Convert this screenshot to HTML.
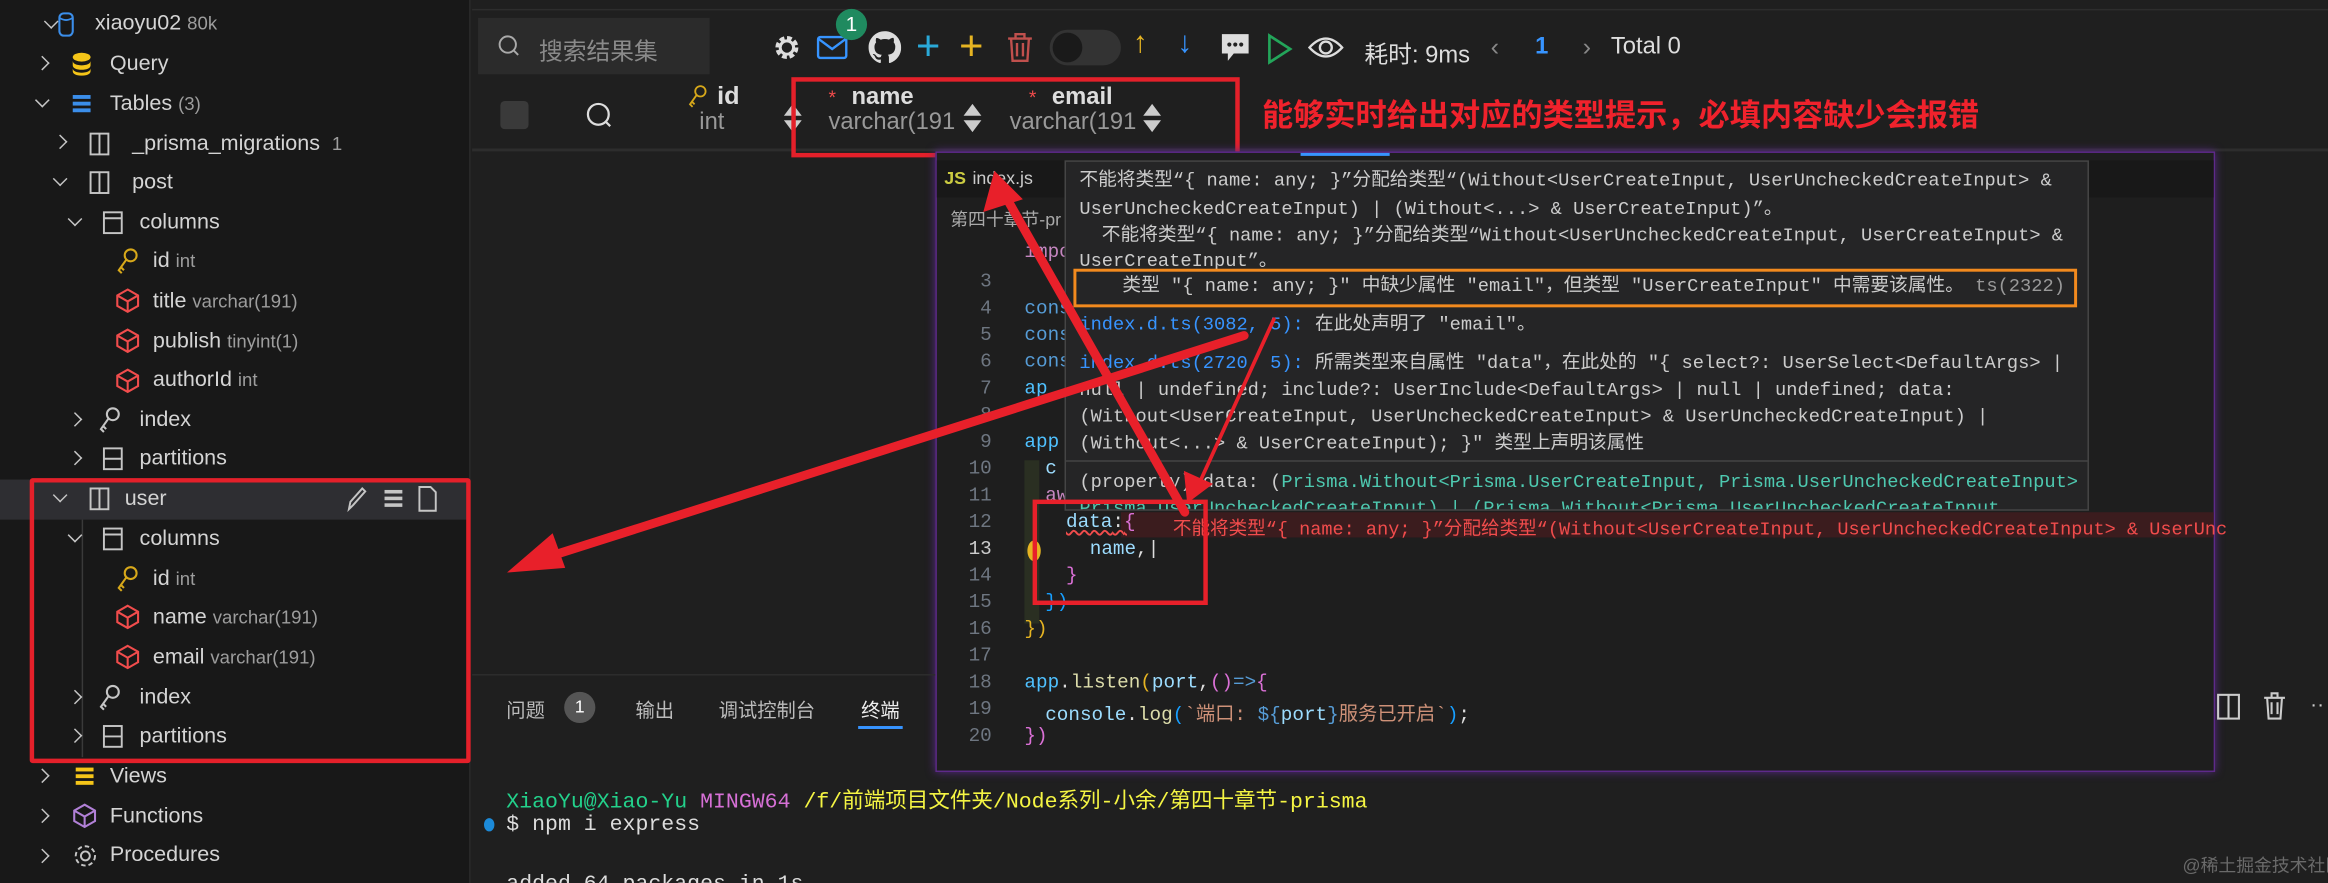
<!DOCTYPE html>
<html><head><meta charset="utf-8"><style>
*{margin:0;padding:0;box-sizing:border-box}
html,body{width:2328px;height:883px;overflow:hidden;background:#1f1f1f}
#w{position:absolute;left:0;top:0;width:1568px;height:595px;transform:scale(1.48469);transform-origin:0 0;background:#1f1f1f;font-family:"Liberation Sans","Noto Sans CJK SC",sans-serif;color:#cccccc;overflow:hidden}
.a{position:absolute;white-space:nowrap}
.t{font-size:14.5px;color:#d4d4d4}
.s{font-size:12.5px;color:#9d9d9d}
.mono{font-family:"Liberation Mono","Noto Sans CJK SC",monospace}
.ch{position:absolute;width:7px;height:7px;border-right:1.4px solid #c5c5c5;border-bottom:1.4px solid #c5c5c5}
.dn{transform:rotate(45deg)}
.rt{transform:rotate(-45deg)}
.pl{font-size:12.6px;line-height:18px}
.ln{position:absolute;left:640px;width:28px;text-align:right;font-size:13px;color:#6e7681;font-family:"Liberation Mono",monospace}
</style></head><body><div id="w">
<!-- sidebar -->
<div class="a" style="left:0;top:0;width:317px;height:595px;background:#181818;border-right:1px solid #2b2b2b"></div>
<div class="a" style="left:0;top:323px;width:317px;height:27px;background:#2e2e32"></div>
<!-- tree rows -->
<div class="ch dn" style="left:31px;top:11px"></div>
<svg class="a" style="left:38px;top:8px" width="14" height="18"><rect x="2" y="1" width="9" height="15" rx="3" fill="none" stroke="#3b8eea" stroke-width="1.4"/><path d="M2 4 Q6.5 7 11 4" stroke="#3b8eea" fill="none" stroke-width="1.2"/></svg>
<div class="a t" style="left:64px;top:8px">xiaoyu02 <span class="s">80k</span></div>

<div class="ch rt" style="left:25px;top:39px"></div>
<svg class="a" style="left:48px;top:35px" width="14" height="16"><ellipse cx="7" cy="3.5" rx="6" ry="3" fill="#f5c518"/><path d="M1 6c0 4 12 4 12 0v3c0 4-12 4-12 0zM1 11c0 4 12 4 12 0v2c0 4-12 4-12 0z" fill="#f5c518"/></svg>
<div class="a t" style="left:74px;top:35px">Query</div>

<div class="ch dn" style="left:25px;top:64px"></div>
<svg class="a" style="left:48px;top:63px" width="14" height="14"><rect x="1" y="1" width="12" height="2.6" fill="#3b8eea"/><rect x="1" y="5.5" width="12" height="2.6" fill="#3b8eea"/><rect x="1" y="10" width="12" height="2.6" fill="#3b8eea"/></svg>
<div class="a t" style="left:74px;top:62px">Tables <span class="s">(3)</span></div>

<svg width="0" height="0" style="position:absolute"><defs>
<symbol id="tb" viewBox="0 0 14 16"><rect x="1" y="1" width="12" height="14" fill="none" stroke="#c5c5c5" stroke-width="1.3"/><line x1="7" y1="1" x2="7" y2="15" stroke="#c5c5c5" stroke-width="1.3"/></symbol>
<symbol id="cl" viewBox="0 0 14 16"><rect x="1" y="1" width="12" height="14" fill="none" stroke="#c5c5c5" stroke-width="1.3"/><line x1="1" y1="5" x2="13" y2="5" stroke="#c5c5c5" stroke-width="1.3"/></symbol>
<symbol id="pt" viewBox="0 0 14 16"><rect x="1" y="1" width="12" height="14" fill="none" stroke="#c5c5c5" stroke-width="1.3"/><line x1="1" y1="8" x2="13" y2="8" stroke="#c5c5c5" stroke-width="1.3"/></symbol>
<symbol id="ky" viewBox="0 0 16 18"><circle cx="10" cy="5" r="4" fill="none" stroke="currentColor" stroke-width="1.4"/><path d="M7 8 L2 15 L4 17 M3.5 13 L5.5 15" fill="none" stroke="currentColor" stroke-width="1.4"/></symbol>
<symbol id="cb" viewBox="0 0 16 18"><path d="M8 1 L15 5 L15 12 L8 16 L1 12 L1 5 Z M1 5 L8 9 L15 5 M8 9 L8 16" fill="none" stroke="currentColor" stroke-width="1.4"/></symbol>
</defs></svg>

<div class="ch rt" style="left:37px;top:92px"></div>
<svg class="a" style="left:60px;top:89px" width="14" height="16"><use href="#tb"/></svg>
<div class="a t" style="left:89px;top:89px">_prisma_migrations <span class="s" style="margin-left:4px">1</span></div>

<div class="ch dn" style="left:37px;top:117px"></div>
<svg class="a" style="left:60px;top:115px" width="14" height="16"><use href="#tb"/></svg>
<div class="a t" style="left:89px;top:115px">post</div>

<div class="ch dn" style="left:47px;top:144px"></div>
<svg class="a" style="left:69px;top:142px" width="14" height="16"><use href="#cl"/></svg>
<div class="a t" style="left:94px;top:142px">columns</div>

<svg class="a" style="left:78px;top:167px;color:#d7a81a" width="16" height="18"><use href="#ky"/></svg>
<div class="a t" style="left:103px;top:168px">id <span class="s">int</span></div>
<svg class="a" style="left:78px;top:194px;color:#f14c4c" width="16" height="18"><use href="#cb"/></svg>
<div class="a t" style="left:103px;top:195px">title <span class="s">varchar(191)</span></div>
<svg class="a" style="left:78px;top:221px;color:#f14c4c" width="16" height="18"><use href="#cb"/></svg>
<div class="a t" style="left:103px;top:222px">publish <span class="s">tinyint(1)</span></div>
<svg class="a" style="left:78px;top:248px;color:#f14c4c" width="16" height="18"><use href="#cb"/></svg>
<div class="a t" style="left:103px;top:248px">authorId <span class="s">int</span></div>

<div class="ch rt" style="left:47px;top:279px"></div>
<svg class="a" style="left:66px;top:274px;color:#c5c5c5" width="16" height="18"><use href="#ky"/></svg>
<div class="a t" style="left:94px;top:275px">index</div>
<div class="ch rt" style="left:47px;top:305px"></div>
<svg class="a" style="left:69px;top:301px" width="14" height="16"><use href="#pt"/></svg>
<div class="a t" style="left:94px;top:301px">partitions</div>

<div class="ch dn" style="left:37px;top:330px"></div>
<svg class="a" style="left:60px;top:328px" width="14" height="16"><use href="#tb"/></svg>
<div class="a t" style="left:84px;top:328px">user</div>
<svg class="a" style="left:232px;top:327px" width="16" height="18"><path d="M3 16 L4 11 L12 2 L14 4 L6 13 Z" fill="none" stroke="#c5c5c5" stroke-width="1.3"/></svg>
<svg class="a" style="left:258px;top:329px" width="14" height="14"><rect x="1" y="1" width="12" height="2.4" fill="#c5c5c5"/><rect x="1" y="5.5" width="12" height="2.4" fill="#c5c5c5"/><rect x="1" y="10" width="12" height="2.4" fill="#c5c5c5"/></svg>
<svg class="a" style="left:281px;top:327px" width="14" height="18"><path d="M1.5 1 L9 1 L12.5 4.5 L12.5 17 L1.5 17 Z" fill="none" stroke="#c5c5c5" stroke-width="1.3"/></svg>
<div class="a" style="left:55px;top:350px;width:1px;height:160px;background:#3a3a3a"></div>

<div class="ch dn" style="left:47px;top:357px"></div>
<svg class="a" style="left:69px;top:355px" width="14" height="16"><use href="#cl"/></svg>
<div class="a t" style="left:94px;top:355px">columns</div>
<svg class="a" style="left:78px;top:381px;color:#d7a81a" width="16" height="18"><use href="#ky"/></svg>
<div class="a t" style="left:103px;top:382px">id <span class="s">int</span></div>
<svg class="a" style="left:78px;top:407px;color:#f14c4c" width="16" height="18"><use href="#cb"/></svg>
<div class="a t" style="left:103px;top:408px">name <span class="s">varchar(191)</span></div>
<svg class="a" style="left:78px;top:434px;color:#f14c4c" width="16" height="18"><use href="#cb"/></svg>
<div class="a t" style="left:103px;top:435px">email <span class="s">varchar(191)</span></div>
<div class="ch rt" style="left:47px;top:466px"></div>
<svg class="a" style="left:66px;top:461px;color:#c5c5c5" width="16" height="18"><use href="#ky"/></svg>
<div class="a t" style="left:94px;top:462px">index</div>
<div class="ch rt" style="left:47px;top:492px"></div>
<svg class="a" style="left:69px;top:488px" width="14" height="16"><use href="#pt"/></svg>
<div class="a t" style="left:94px;top:488px">partitions</div>

<div class="ch rt" style="left:25px;top:519px"></div>
<svg class="a" style="left:50px;top:516px" width="14" height="14"><rect x="1" y="1" width="12" height="2.6" fill="#f5c518"/><rect x="1" y="5.5" width="12" height="2.6" fill="#f5c518"/><rect x="1" y="10" width="12" height="2.6" fill="#f5c518"/></svg>
<div class="a t" style="left:74px;top:515px">Views</div>
<div class="ch rt" style="left:25px;top:546px"></div>
<svg class="a" style="left:49px;top:541px;color:#b180d7" width="16" height="18"><use href="#cb"/></svg>
<div class="a t" style="left:74px;top:542px">Functions</div>
<div class="ch rt" style="left:25px;top:573px"></div>
<svg class="a" style="left:49px;top:568px" width="17" height="17"><circle cx="8.5" cy="8.5" r="3" fill="none" stroke="#c5c5c5" stroke-width="1.3"/><circle cx="8.5" cy="8.5" r="6.5" fill="none" stroke="#c5c5c5" stroke-width="1.3" stroke-dasharray="3 2"/></svg>
<div class="a t" style="left:74px;top:568px">Procedures</div>

<!-- user red box -->
<div class="a" style="left:20px;top:322px;width:297px;height:192px;border:3px solid #e4202a;border-radius:2px"></div>

<!-- toolbar -->
<div class="a" style="left:318px;top:6px;width:1250px;height:1px;background:#2d2d2d"></div>
<div class="a" style="left:322px;top:12px;width:156px;height:38px;background:#2b2b2b"></div>
<svg class="a" style="left:335px;top:23px" width="16" height="18"><circle cx="7" cy="7" r="5.5" fill="none" stroke="#aaa" stroke-width="1.3"/><line x1="11" y1="11" x2="14" y2="14" stroke="#aaa" stroke-width="1.3"/></svg>
<div class="a" style="left:363px;top:21px;font-size:16px;color:#8a8a8a">搜索结果集</div>
<svg class="a" style="left:520px;top:22px" width="20" height="20"><circle cx="10" cy="10" r="6" fill="none" stroke="#ddd" stroke-width="3.5" stroke-dasharray="3 1.7"/><circle cx="10" cy="10" r="4.5" fill="none" stroke="#ddd" stroke-width="2"/></svg>
<svg class="a" style="left:550px;top:23px" width="22" height="18"><rect x="1" y="2" width="19" height="14" rx="1.5" fill="none" stroke="#3794ff" stroke-width="1.6"/><path d="M1 3 L10.5 10 L20 3" fill="none" stroke="#3794ff" stroke-width="1.6"/></svg>
<div class="a" style="left:563px;top:6px;width:21px;height:21px;border-radius:50%;background:#1f8a5f;color:#fff;font-size:14px;text-align:center;line-height:21px">1</div>
<svg class="a" style="left:585px;top:21px" width="22" height="22" viewBox="0 0 16 16"><path fill="#ddd" d="M8 0C3.58 0 0 3.58 0 8c0 3.54 2.29 6.53 5.47 7.59.4.07.55-.17.55-.38v-1.33c-2.23.48-2.7-1.07-2.7-1.07-.36-.92-.89-1.17-.89-1.17-.73-.5.05-.49.05-.49.8.06 1.23.83 1.23.83.72 1.23 1.87.87 2.33.66.07-.52.28-.87.5-1.07-1.78-.2-3.64-.89-3.64-3.95 0-.87.31-1.59.82-2.15-.08-.2-.36-1.02.08-2.12 0 0 .67-.21 2.2.82A7.6 7.6 0 0 1 8 3.86c.68 0 1.36.09 2 .27 1.53-1.04 2.2-.82 2.2-.82.44 1.1.16 1.92.08 2.12.51.56.82 1.27.82 2.15 0 3.07-1.87 3.75-3.65 3.95.29.25.54.73.54 1.48v2.2c0 .21.15.46.55.38A8 8 0 0 0 16 8c0-4.42-3.58-8-8-8z"/></svg>
<div class="a" style="left:617px;top:16px;font-size:28px;color:#2aa9d8;line-height:30px">+</div>
<div class="a" style="left:646px;top:16px;font-size:28px;color:#e6b422;line-height:30px">+</div>
<svg class="a" style="left:677px;top:21px" width="20" height="22"><path d="M2 5 H18 M7 5 V2 H13 V5 M4 5 L5 20 H15 L16 5 M8 8 V17 M12 8 V17" fill="none" stroke="#c0504d" stroke-width="1.6"/></svg>
<div class="a" style="left:707px;top:20px;width:48px;height:24px;border-radius:12px;background:#333"></div>
<div class="a" style="left:709px;top:22px;width:20px;height:20px;border-radius:50%;background:#1a1a1a"></div>
<div class="a" style="left:763px;top:18px;font-size:20px;color:#e6b422">↑</div>
<div class="a" style="left:793px;top:18px;font-size:20px;color:#3794ff">↓</div>
<svg class="a" style="left:822px;top:22px" width="20" height="22"><path d="M1 1 H19 V14 H9 L5 19 V14 H1 Z" fill="#ddd"/><circle cx="6" cy="8" r="1.4" fill="#222"/><circle cx="10" cy="8" r="1.4" fill="#222"/><circle cx="14" cy="8" r="1.4" fill="#222"/></svg>
<svg class="a" style="left:853px;top:22px" width="18" height="22"><path d="M2 2 L16 11 L2 20 Z" fill="none" stroke="#23a55a" stroke-width="1.8"/></svg>
<svg class="a" style="left:881px;top:22px" width="24" height="20"><path d="M1 10 Q12 -2 23 10 Q12 22 1 10 Z" fill="none" stroke="#ddd" stroke-width="1.6"/><circle cx="12" cy="10" r="4" fill="none" stroke="#ddd" stroke-width="1.6"/></svg>
<div class="a" style="left:919px;top:23px;font-size:16px;color:#ddd">耗时: 9ms</div>
<div class="a" style="left:1004px;top:22px;font-size:17px;color:#888">‹</div>
<div class="a" style="left:1034px;top:23px;font-size:16px;color:#3794ff;font-weight:bold">1</div>
<div class="a" style="left:1066px;top:22px;font-size:17px;color:#888">›</div>
<div class="a" style="left:1085px;top:23px;font-size:16px;color:#ddd">Total 0</div>

<!-- header row -->
<div class="a" style="left:318px;top:100px;width:1250px;height:2px;background:#2d2d2d"></div>
<div class="a" style="left:337px;top:68px;width:19px;height:19px;border-radius:3px;background:#3a3a3a"></div>
<svg class="a" style="left:394px;top:68px" width="20" height="20"><circle cx="9" cy="9" r="7" fill="none" stroke="#ddd" stroke-width="1.5"/><line x1="14" y1="14" x2="17" y2="17" stroke="#ddd" stroke-width="1.5"/></svg>
<svg class="a" style="left:463px;top:57px;color:#d7a81a" width="14" height="16"><use href="#ky"/></svg>
<div class="a" style="left:483px;top:55px;font-size:17px;font-weight:bold;color:#ddd">id</div>
<div class="a" style="left:471px;top:74px;font-size:16px;color:#999">int</div>
<div class="a" style="left:528px;top:70px;width:0;height:0;border-left:6px solid transparent;border-right:6px solid transparent;border-bottom:8px solid #ccc"></div>
<div class="a" style="left:528px;top:81px;width:0;height:0;border-left:6px solid transparent;border-right:6px solid transparent;border-top:8px solid #ccc"></div>
<div class="a" style="left:558px;top:57px;font-size:16px;color:#ddd;font-weight:bold"><span style="color:#f14c4c;font-weight:normal;font-size:13px;margin-right:6px">*</span> name</div>
<div class="a" style="left:558px;top:74px;font-size:16px;color:#999">varchar(191</div>
<div class="a" style="left:649px;top:70px;width:0;height:0;border-left:6px solid transparent;border-right:6px solid transparent;border-bottom:8px solid #ccc"></div>
<div class="a" style="left:649px;top:81px;width:0;height:0;border-left:6px solid transparent;border-right:6px solid transparent;border-top:8px solid #ccc"></div>
<div class="a" style="left:693px;top:57px;font-size:16px;color:#ddd;font-weight:bold"><span style="color:#f14c4c;font-weight:normal;font-size:13px;margin-right:6px">*</span> email</div>
<div class="a" style="left:680px;top:74px;font-size:16px;color:#999">varchar(191</div>
<div class="a" style="left:770px;top:70px;width:0;height:0;border-left:6px solid transparent;border-right:6px solid transparent;border-bottom:8px solid #ccc"></div>
<div class="a" style="left:770px;top:81px;width:0;height:0;border-left:6px solid transparent;border-right:6px solid transparent;border-top:8px solid #ccc"></div>
<div class="a" style="left:533px;top:52px;width:302px;height:54px;border:3px solid #e4202a"></div>
<div class="a" style="left:850px;top:62px;font-size:21px;font-weight:bold;color:#f0222c;font-family:'Noto Sans CJK SC',sans-serif">能够实时给出对应的类型提示，必填内容缺少会报错</div>

<!-- editor panel -->
<div class="a" style="left:630px;top:102px;width:862px;height:418px;background:#1e1e1e;border:1.5px solid #5e2a8a;box-shadow:0 0 6px #5a2a8a"></div>
<div class="a" style="left:631px;top:108px;width:860px;height:25px;background:#181818"></div>
<div class="a" style="left:876px;top:103px;width:60px;height:2px;background:#3794ff"></div>
<div class="a" style="left:636px;top:113px;font-size:12px;color:#cbcb41;font-weight:bold">JS</div>
<div class="a" style="left:655px;top:113px;font-size:12px;color:#ccc">index.js</div>
<div class="a" style="left:640px;top:139px;font-size:12px;color:#aaa">第四十章节-pr</div>
<div class="ln" style="top:182px">3</div><div class="ln" style="top:200px">4</div><div class="ln" style="top:218px">5</div><div class="ln" style="top:236px">6</div><div class="ln" style="top:254px">7</div><div class="ln" style="top:272px">8</div><div class="ln" style="top:290px">9</div><div class="ln" style="top:308px">10</div><div class="ln" style="top:326px">11</div><div class="ln" style="top:344px">12</div><div class="ln" style="top:362px;color:#ccc">13</div><div class="ln" style="top:380px">14</div><div class="ln" style="top:398px">15</div><div class="ln" style="top:416px">16</div><div class="ln" style="top:434px">17</div><div class="ln" style="top:452px">18</div><div class="ln" style="top:470px">19</div><div class="ln" style="top:488px">20</div>
<div class="a mono" style="left:690px;top:162px;font-size:13px;color:#c586c0">impo</div>
<div class="a mono" style="left:690px;top:200px;font-size:13px;color:#569cd6">cons</div>
<div class="a mono" style="left:690px;top:218px;font-size:13px;color:#569cd6">cons</div>
<div class="a mono" style="left:690px;top:236px;font-size:13px;color:#569cd6">cons</div>
<div class="a mono" style="left:690px;top:254px;font-size:13px;color:#4fc1ff">ap</div>
<div class="a mono" style="left:690px;top:290px;font-size:13px;color:#4fc1ff">app</div>
<div class="a mono" style="left:704px;top:308px;font-size:13px;color:#9cdcfe">c</div>
<div class="a mono" style="left:704px;top:326px;font-size:13px;color:#c586c0">aw</div>
<div class="a" style="left:690px;top:310px;width:10px;height:110px;background:#2a2f22"></div>
<div class="a" style="left:755px;top:345px;width:736px;height:17px;background:#3b1c1e"></div>
<div class="a mono" style="left:718px;top:344px;font-size:13px;color:#9cdcfe;text-decoration:underline wavy #f14c4c">data<span style="color:#ddd">:</span><span style="color:#da70d6">{</span></div>
<div class="a mono" style="left:790px;top:345px;font-size:12.5px;color:#f14c4c">不能将类型“{ name: any; }”分配给类型“(Without&lt;UserCreateInput, UserUncheckedCreateInput&gt; &amp; UserUnc</div>
<div class="a" style="left:692px;top:364px;width:9px;height:14px;border-radius:50%;background:#e6b422"></div>
<div class="a mono" style="left:734px;top:362px;font-size:13px;color:#9cdcfe">name<span style="color:#ddd">,|</span></div>
<div class="a mono" style="left:718px;top:380px;font-size:13px;color:#da70d6">}</div>
<div class="a mono" style="left:704px;top:398px;font-size:13px;color:#179fff">})</div>
<div class="a mono" style="left:690px;top:416px;font-size:13px;color:#e6b422">})</div>
<div class="a mono" style="left:690px;top:452px;font-size:13px;color:#4fc1ff">app<span style="color:#ddd">.</span><span style="color:#dcdcaa">listen</span><span style="color:#e6b422">(</span><span style="color:#9cdcfe">port</span><span style="color:#ddd">,</span><span style="color:#da70d6">()</span><span style="color:#569cd6">=&gt;</span><span style="color:#da70d6">{</span></div>
<div class="a mono" style="left:704px;top:470px;font-size:13px;color:#9cdcfe">console<span style="color:#ddd">.</span><span style="color:#dcdcaa">log</span><span style="color:#179fff">(</span><span style="color:#ce9178">`端口: </span><span style="color:#569cd6">${</span>port<span style="color:#569cd6">}</span><span style="color:#ce9178">服务已开启`</span><span style="color:#179fff">)</span><span style="color:#ddd">;</span></div>
<div class="a mono" style="left:690px;top:488px;font-size:13px;color:#da70d6">})</div>

<!-- hover popup -->
<div class="a" style="left:717px;top:108px;width:690px;height:236px;background:#252526;border:1px solid #454545;overflow:hidden">
<div class="a mono pl" style="left:9px;top:4px">不能将类型“{ name: any; }”分配给类型“(Without&lt;UserCreateInput, UserUncheckedCreateInput&gt; &amp;</div>
<div class="a mono pl" style="left:9px;top:23px">UserUncheckedCreateInput) | (Without&lt;...&gt; &amp; UserCreateInput)”。</div>
<div class="a mono pl" style="left:9px;top:41px">&nbsp;&nbsp;不能将类型“{ name: any; }”分配给类型“Without&lt;UserUncheckedCreateInput, UserCreateInput&gt; &amp;</div>
<div class="a mono pl" style="left:9px;top:58px">UserCreateInput”。</div>
<div class="a mono pl" style="left:38px;top:75px">类型 "{ name: any; }" 中缺少属性 "email"，但类型 "UserCreateInput" 中需要该属性。 <span style="color:#999">ts(2322)</span></div>
<div class="a mono pl" style="left:9px;top:101px"><span style="color:#3794ff">index.d.ts(3082, 5):</span> 在此处声明了 "email"。</div>
<div class="a mono pl" style="left:9px;top:127px"><span style="color:#3794ff">index.d.ts(2720, 5):</span> 所需类型来自属性 "data"，在此处的 "{ select?: UserSelect&lt;DefaultArgs&gt; |</div>
<div class="a mono pl" style="left:9px;top:145px">null | undefined; include?: UserInclude&lt;DefaultArgs&gt; | null | undefined; data:</div>
<div class="a mono pl" style="left:9px;top:163px">(Without&lt;UserCreateInput, UserUncheckedCreateInput&gt; &amp; UserUncheckedCreateInput) |</div>
<div class="a mono pl" style="left:9px;top:181px">(Without&lt;...&gt; &amp; UserCreateInput); }" 类型上声明该属性</div>
<div class="a" style="left:0;top:201px;width:690px;height:1px;background:#454545"></div>
<div class="a mono pl" style="left:9px;top:207px">(property) data: (<span style="color:#4ec9b0">Prisma.Without&lt;Prisma.UserCreateInput, Prisma.UserUncheckedCreateInput&gt;</span> &amp;</div>
<div class="a mono pl" style="left:9px;top:225px"><span style="color:#4ec9b0">Prisma.UserUncheckedCreateInput) | (Prisma.Without&lt;Prisma.UserUncheckedCreateInput</span></div>
</div>
<div class="a" style="left:723px;top:181px;width:676px;height:26px;border:2.5px solid #f28a1e"></div>

<!-- bottom panel -->
<div class="a" style="left:318px;top:454px;width:312px;height:1px;background:#2d2d2d"></div>
<div class="a" style="left:341px;top:468px;font-size:13px;color:#bbb">问题</div>
<div class="a" style="left:380px;top:466px;width:21px;height:21px;border-radius:50%;background:#555;color:#fff;font-size:12px;text-align:center;line-height:21px">1</div>
<div class="a" style="left:428px;top:468px;font-size:13px;color:#bbb">输出</div>
<div class="a" style="left:484px;top:468px;font-size:13px;color:#bbb">调试控制台</div>
<div class="a" style="left:580px;top:468px;font-size:13px;color:#eee">终端</div>
<div class="a" style="left:578px;top:489px;width:30px;height:1.5px;background:#3794ff"></div>
<svg class="a" style="left:1493px;top:467px" width="16" height="18"><rect x="1" y="1" width="14" height="16" fill="none" stroke="#ccc" stroke-width="1.4"/><line x1="8" y1="1" x2="8" y2="17" stroke="#ccc" stroke-width="1.4"/></svg>
<svg class="a" style="left:1524px;top:466px" width="16" height="20"><path d="M1 4 H15 M6 4 V1 H10 V4 M3 4 L4 18 H12 L13 4 M6 7 V15 M10 7 V15" fill="none" stroke="#ccc" stroke-width="1.4"/></svg>
<div class="a" style="left:1556px;top:466px;font-size:14px;color:#ccc">··</div>
<div class="a mono" style="left:341px;top:528px;font-size:14.5px;color:#23d18b">XiaoYu@Xiao-Yu <span style="color:#d670d6">MINGW64</span> <span style="color:#f5f543">/f/前端项目文件夹/Node系列-小余/第四十章节-prisma</span></div>
<div class="a" style="left:326px;top:551px;width:7px;height:9px;border-radius:50%;background:#1c8ad8"></div>
<div class="a mono" style="left:341px;top:548px;font-size:14.5px;color:#ddd">$ npm i express</div>
<div class="a mono" style="left:341px;top:588px;font-size:14.5px;color:#ddd">added 64 packages in 1s</div>
<div class="a" style="left:1470px;top:574px;font-size:12px;color:#6a6a6a">@稀土掘金技术社区</div>

<!-- arrows -->
<svg class="a" style="left:0;top:0" width="1568" height="595">
<g stroke="#e8202a" fill="#e8202a" stroke-linecap="round">
<line x1="838" y1="226" x2="360" y2="378" stroke-width="6"/>
<polygon points="343,385 372,360 380,382" />
<line x1="798" y1="345" x2="676" y2="130" stroke-width="6"/>
<polygon points="670,116 663,142 688,134"/>
<line x1="858" y1="215" x2="808" y2="325" stroke-width="2.5"/>
<polygon points="800,338 798,318 816,326"/>
</g>
<rect x="697" y="338" width="115" height="68" fill="none" stroke="#e8202a" stroke-width="3"/>
</svg>
</div></body></html>
